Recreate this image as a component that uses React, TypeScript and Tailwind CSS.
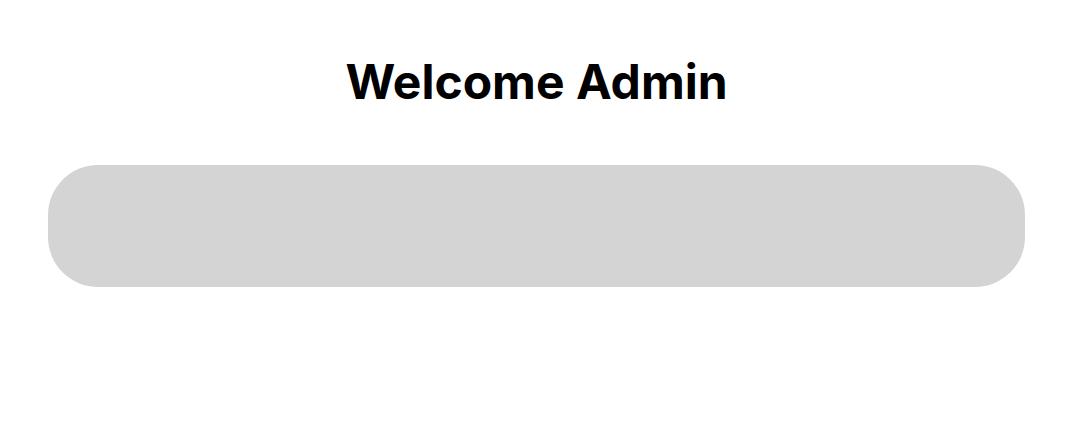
export default function App() {
  return (
    <div className="min-h-[440px] bg-white" style={{ fontFamily: 'Inter, sans-serif' }}>
      <div className="px-12 pt-[58px]">
        <h1 className="text-center text-5xl font-bold text-black">Welcome Admin</h1>
        <div className="mt-[59px] h-[122px] rounded-[50px] bg-[#d4d4d4]" />
      </div>
    </div>
  );
}
